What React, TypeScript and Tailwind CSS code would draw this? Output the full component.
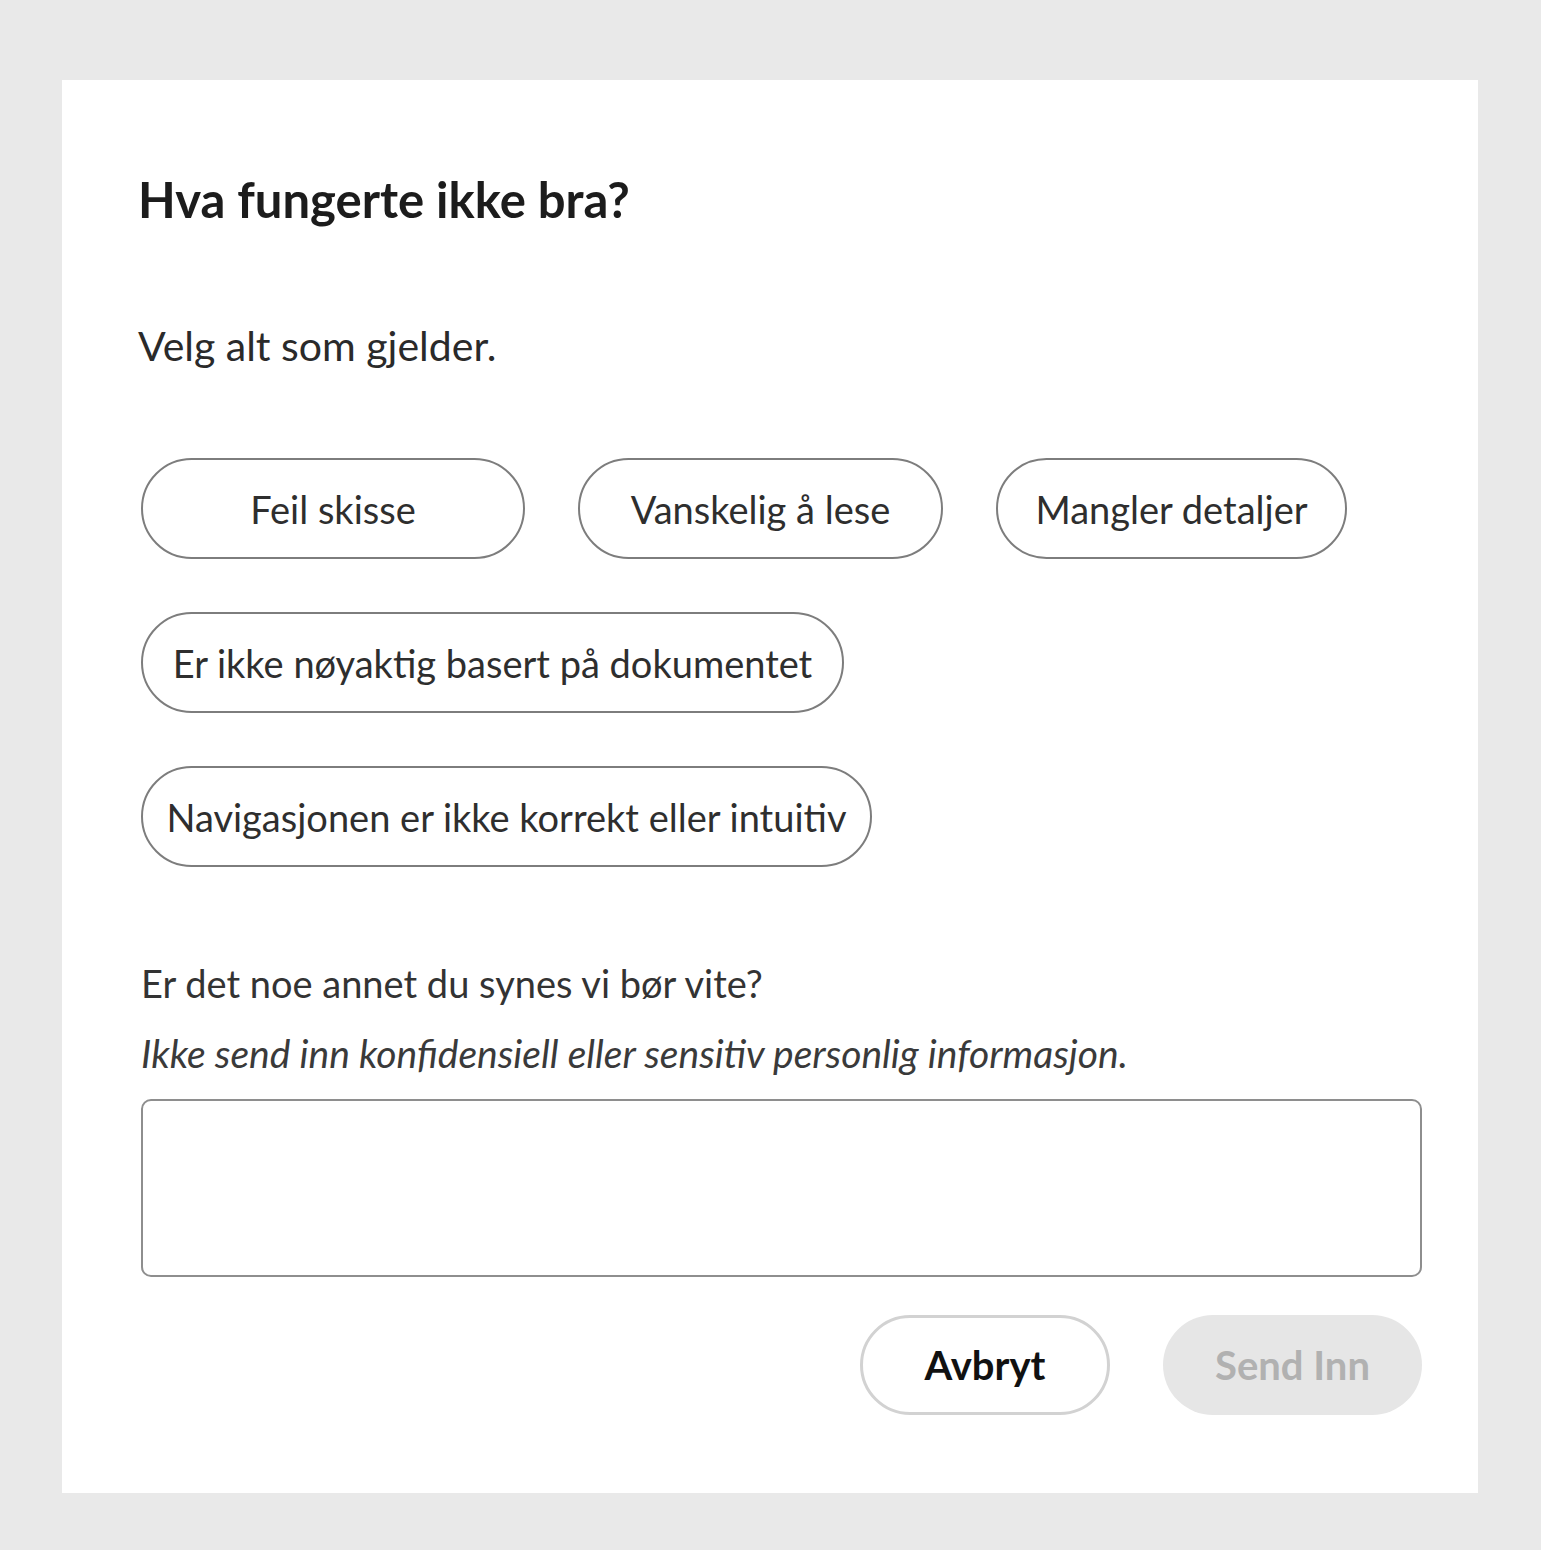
import React, { useState } from 'react'

const options = [
  { label: 'Feil skisse', width: 'w-[384px]' },
  { label: 'Vanskelig å lese', width: 'w-[365px]' },
  { label: 'Mangler detaljer', width: 'w-[351px]' },
  { label: 'Er ikke nøyaktig basert på dokumentet', width: 'w-[703px]' },
  { label: 'Navigasjonen er ikke korrekt eller intuitiv', width: 'w-[731px]' },
]

export default function App() {
  const [selected, setSelected] = useState<string[]>([])
  const [comment, setComment] = useState('')

  const toggle = (label: string) => {
    setSelected((prev) =>
      prev.includes(label) ? prev.filter((l) => l !== label) : [...prev, label]
    )
  }

  return (
    <div className="min-h-screen bg-[#e9e9e9] pt-[80px] pl-[62px] font-['Lato',sans-serif]">
      <div className="w-[1416px] h-[1413px] bg-white pl-[79px] pr-[56px] pt-[89px]">
        {/* Header */}
        <h1 className="-ml-[3px] text-[49px] leading-[60px] font-bold text-[#1c1c1c]">
          Hva fungerte ikke bra?
        </h1>
        <p className="-ml-[3px] mt-[89px] text-[41px] leading-[56px] text-[#2a2a2a]">
          Velg alt som gjelder.
        </p>

        {/* Options */}
        <div className="mt-[84px] flex flex-col gap-[53px] w-[1240px]">
          <div className="flex gap-[53px]">
            {options.slice(0, 3).map((o) => (
              <Chip key={o.label} {...o} active={selected.includes(o.label)} onClick={() => toggle(o.label)} />
            ))}
          </div>
          {options.slice(3).map((o) => (
            <div key={o.label} className="flex">
              <Chip {...o} active={selected.includes(o.label)} onClick={() => toggle(o.label)} />
            </div>
          ))}
        </div>

        {/* Comment */}
        <p className="mt-[91px] text-[38px] leading-[50px] text-[#333]">
          Er det noe annet du synes vi bør vite?
        </p>
        <p className="mt-[20px] text-[39px] leading-[50px] italic text-[#3a3a3a]">
          Ikke send inn konfidensiell eller sensitiv personlig informasjon.
        </p>
        <textarea
          value={comment}
          onChange={(e) => setComment(e.target.value)}
          className="mt-[21px] block w-[1281px] h-[178px] resize-none rounded-[10px] border-2 border-[#8e8e8e] bg-white px-4 py-3 text-[32px] outline-none"
        />

        {/* Actions */}
        <div className="mt-[38px] flex justify-end gap-[53px] w-[1281px]">
          <button className="w-[250px] h-[100px] rounded-full border-[3px] border-[#d2d2d2] bg-white text-[40px] font-bold text-[#111]">
            Avbryt
          </button>
          <button
            disabled={selected.length === 0 && !comment.trim()}
            className="w-[259px] h-[100px] rounded-full bg-[#e6e6e6] text-[40px] font-bold text-[#b1b1b1]"
          >
            Send Inn
          </button>
        </div>
      </div>
    </div>
  )
}

function Chip({ label, width, active, onClick }: { label: string; width: string; active: boolean; onClick: () => void }) {
  return (
    <button
      onClick={onClick}
      className={`${width} h-[101px] rounded-full border-2 flex items-center justify-center text-[38px] leading-none ${
        active ? 'border-[#333] bg-[#f2f2f2] text-[#111]' : 'border-[#7d7d7d] bg-white text-[#2e2e2e]'
      }`}
    >
      {label}
    </button>
  )
}
